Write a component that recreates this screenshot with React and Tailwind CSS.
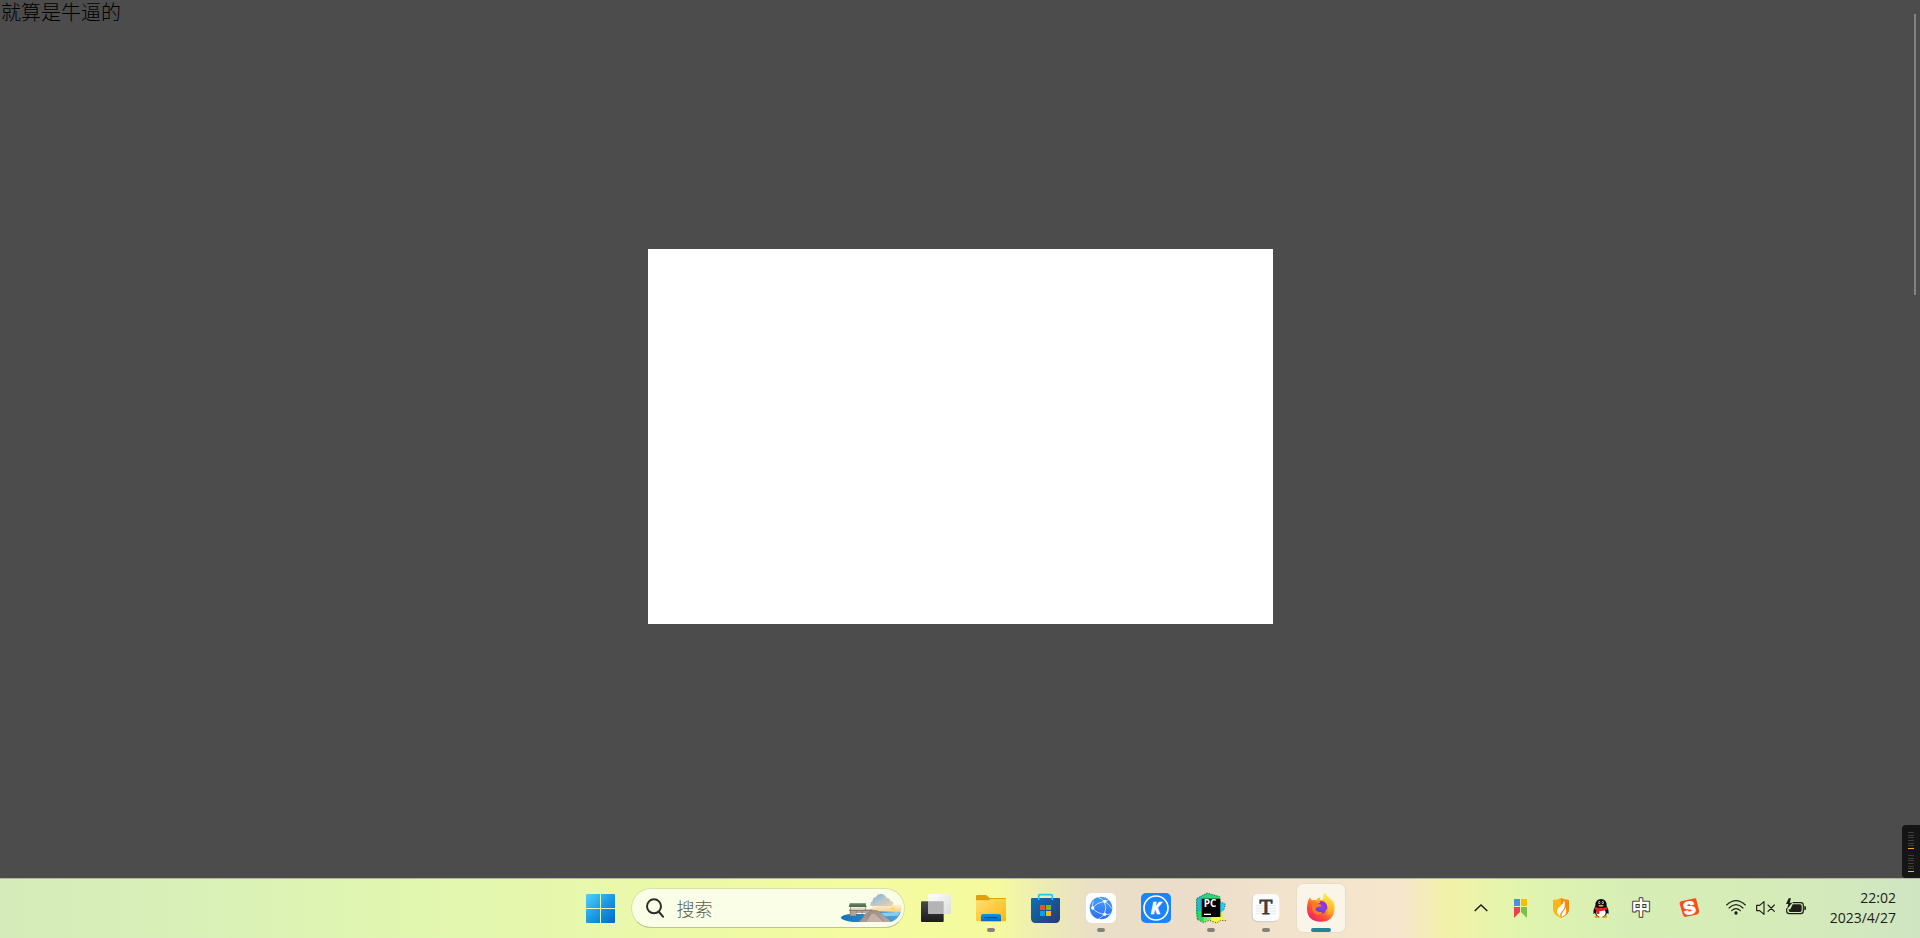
import React from "react";

function StartIcon() {
  return (
    <svg viewBox="45 42 144 144" className="size-12" aria-hidden="true">
      <defs>
        <linearGradient id="win" gradientUnits="userSpaceOnUse" x1="75" y1="72" x2="162" y2="159">
          <stop offset="0" stopColor="#4fd3fb" />
          <stop offset="0.5" stopColor="#1a9be4" />
          <stop offset="1" stopColor="#0067cc" />
        </linearGradient>
      </defs>
      <path
        fill="url(#win)"
        d="M78 72h39v42H75V75q0-3 3-3zM120 72h39q3 0 3 3v39h-42zM75 117h42v42H78q-3 0-3-3zM120 117h42v39q0 3-3 3h-39z"
      />
    </svg>
  );
}

function PierArt() {
  return (
    <svg viewBox="840 78 186 90" className="h-[30px] w-[62px]" aria-hidden="true">
      <defs>
        <linearGradient id="sea" x1="0" y1="0" x2="1" y2="0">
          <stop offset="0" stopColor="#1372b8" />
          <stop offset="1" stopColor="#4ba7dd" />
        </linearGradient>
        <linearGradient id="cloud" x1="0" y1="0" x2="1" y2="1">
          <stop offset="0" stopColor="#78b0dc" />
          <stop offset="0.5" stopColor="#b9c5cd" />
          <stop offset="1" stopColor="#f6cfae" />
        </linearGradient>
        <linearGradient id="dusk" x1="0" y1="0" x2="0" y2="1">
          <stop offset="0" stopColor="#fdf3d2" />
          <stop offset="1" stopColor="#fbc987" />
        </linearGradient>
        <linearGradient id="deck" x1="0" y1="0" x2="1" y2="1">
          <stop offset="0" stopColor="#94877f" />
          <stop offset="1" stopColor="#bca89d" />
        </linearGradient>
      </defs>
      <path fill="url(#dusk)" d="M932 124q30-12 92-12 2 14-2 24l-90 2z" />
      <circle cx="999" cy="126" r="7" fill="#ffd76a" />
      <path fill="url(#sea)" d="M842 152q6-9 28-11h52l20-8 80 2q-6 21-28 30H878q-30-4-36-13z" />
      <path fill="#8ccbea" d="M962 138l58-4-6 12-40 2z" />
      <path fill="url(#cloud)" d="M931 114q-1-8 7-13 1-10 9-10 5-11 17-10 12 1 15 12 10-1 12 8 9 2 9 9 0 6-8 7h-48q-10 3-13-3z" />
      <path fill="#b3a39a" d="M868 128h68l16 10-30 8h-12l8-8h-30v8h-18z" />
      <path fill="url(#deck)" d="M918 140l16-12 18 2 42 35h-38l-16-22-22 22h-20z" />
      <path fill="#c3b1a6" d="M934 140h12l28 25h-58z" />
      <path fill="#8d8079" d="M868 128h68v4h-68z" />
      <path stroke="#786b66" strokeWidth="1.5" fill="none" d="M932 140l-14 24M946 140l26 24M872 132v20M890 132v14M906 132v12" />
      <path fill="#566f54" d="M870 108h46l4 12h-54z" />
      <path fill="#83a070" d="M872 108h44l2 4h-48z" />
      <path stroke="#6d6359" strokeWidth="2" d="M872 120v9M916 120v9" />
      <path fill="#e6dcc4" d="M875 121h38v6h-38z" />
    </svg>
  );
}

function TaskViewIcon() {
  return (
    <svg viewBox="36 42 144 144" className="size-12" aria-hidden="true">
      <defs>
        <linearGradient id="tvd" x1="0" y1="0" x2="0" y2="1">
          <stop offset="0" stopColor="#4a4a4a" />
          <stop offset="1" stopColor="#1b1b1b" />
        </linearGradient>
        <linearGradient id="tvl" x1="0" y1="0" x2="1" y2="1">
          <stop offset="0" stopColor="#ffffff" />
          <stop offset="1" stopColor="#dcdcdc" />
        </linearGradient>
      </defs>
      <rect x="63" y="94" width="68" height="62" rx="3" fill="url(#tvd)" />
      <rect x="85" y="72" width="68" height="60" rx="3" fill="url(#tvl)" />
      <path d="M85 94h46v38H88q-3 0-3-3z" fill="#b4b4b4" />
    </svg>
  );
}

function FolderIcon() {
  return (
    <svg viewBox="201 42 144 144" className="size-12" aria-hidden="true">
      <defs>
        <linearGradient id="fold" x1="0" y1="0" x2="1" y2="1">
          <stop offset="0" stopColor="#ffdf74" />
          <stop offset="1" stopColor="#fbb710" />
        </linearGradient>
        <linearGradient id="tray" x1="0" y1="0" x2="0" y2="1">
          <stop offset="0" stopColor="#1593df" />
          <stop offset="1" stopColor="#0768bd" />
        </linearGradient>
      </defs>
      <path fill="#dfa00b" d="M228 96V79q0-4 4-4h24q3 0 5 2l8 7h46q3 0 3 3v9z" />
      <path fill="url(#fold)" d="M228 91h34q3 0 5-1l5-3h46v64q0 3-3 3h-84q-3 0-3-3z" />
      <path fill="url(#tray)" d="M243 154v-16q0-6 6-6h48q6 0 6 6v16z" />
      <path stroke="#054b8c" strokeWidth="3" strokeLinecap="round" d="M254 143h37" />
    </svg>
  );
}

function StoreIcon() {
  return (
    <svg viewBox="366 42 144 144" className="size-12" aria-hidden="true">
      <defs>
        <linearGradient id="bag" x1="0" y1="0" x2="1" y2="1">
          <stop offset="0" stopColor="#0c6fbe" />
          <stop offset="1" stopColor="#273a6e" />
        </linearGradient>
      </defs>
      <path fill="url(#bag)" d="M396 84h81q3 0 3 3v58q0 14-14 14h-59q-14 0-14-14V87q0-3 3-3z" />
      <path fill="none" stroke="#1fc5f5" strokeWidth="5" d="M416 90V78q0-4 4-4h33q4 0 4 4v12" />
      <path fill="#f25022" d="M420 105h15v15h-15z" />
      <path fill="#7fba00" d="M438 105h15v15h-15z" />
      <path fill="#00a4ef" d="M420 123h15v15h-15z" />
      <path fill="#ffb900" d="M438 123h15v15h-15z" />
    </svg>
  );
}

function NetworkIcon() {
  return (
    <svg viewBox="531 42 144 144" className="size-12" aria-hidden="true">
      <defs>
        <linearGradient id="globe" x1="0" y1="0" x2="0" y2="1">
          <stop offset="0" stopColor="#4aa0fc" />
          <stop offset="1" stopColor="#2b6df0" />
        </linearGradient>
      </defs>
      <rect x="558" y="69" width="90" height="90" rx="17" fill="#fff" />
      <circle cx="603" cy="114" r="34" fill="url(#globe)" />
      <path
        fill="none"
        stroke="#e2f0ff"
        strokeWidth="2.5"
        d="M594 81q10 4 19 13-24 4-36 20 14 16 36 19-10 10-18 14M613 94q9 20 0 39M613 94q8-1 14-6M613 133q10 1 18-1M577 114q-1-9 3-19M613 94q16 9 23 22"
      />
      <circle cx="578" cy="114" r="5" fill="#fff" />
      <circle cx="614" cy="94" r="5" fill="#fff" />
      <circle cx="614" cy="133" r="5" fill="#fff" />
    </svg>
  );
}

function KugouIcon() {
  return (
    <svg viewBox="6 42 144 144" className="size-12" aria-hidden="true">
      <rect x="33" y="69" width="90" height="90" rx="15" fill="#1c84fb" />
      <circle cx="78" cy="114" r="36" fill="none" stroke="#fff" strokeWidth="5" />
      <text
        x="77"
        y="131"
        textAnchor="middle"
        className="fill-white stroke-white stroke-2 font-['Open_Sans',sans-serif] text-[48px] font-bold italic"
      >
        K
      </text>
    </svg>
  );
}

function PyCharmIcon() {
  return (
    <svg viewBox="171 42 144 144" className="size-12" aria-hidden="true">
      <defs>
        <linearGradient id="pc" x1="0" y1="0" x2="1" y2="1">
          <stop offset="0" stopColor="#21c8a0" />
          <stop offset="0.45" stopColor="#30df6c" />
          <stop offset="0.8" stopColor="#c9f450" />
          <stop offset="1" stopColor="#fcf84a" />
        </linearGradient>
      </defs>
      <path
        fill="url(#pc)"
        d="M200 86l12-7 19-10 14 4 22 6 4 14 8 48 8 11-16-1-12 8-22-8-18 7-18-10-3-20z"
      />
      <path fill="#1fb9c9" d="M200 86l12-7 3 20-4 26-11-3z" />
      <path fill="#22d2f0" d="M266 94l20 8-5 20-12 6z" />
      <path fill="#fbf24a" d="M244 138l34 2 9 11-16 1-12 6-16-6z" />
      <path fill="#2bd95e" d="M202 128l16 8 4 20-18-9z" />
      <path
        fill="none"
        stroke="#162a20"
        strokeWidth="2"
        strokeDasharray="4 4"
        d="M202 148l-3-62 32-17 38 11v14l17 8-5 20M288 152l-16-1-12 8-22-8-18 7-18-10"
      />
      <rect x="215" y="86" width="56" height="55" fill="#000" />
      <path fill="#fff" d="M222 131h21v4h-21z" />
      <text
        x="240"
        y="112"
        textAnchor="middle"
        className="fill-white font-['Open_Sans',sans-serif] text-[30px] font-bold"
      >
        PC
      </text>
    </svg>
  );
}

function TyporaIcon() {
  return (
    <svg viewBox="336 42 144 144" className="size-12" aria-hidden="true">
      <rect x="365" y="74" width="81" height="83" rx="15" fill="#d3d0cb" />
      <rect x="368" y="72" width="80" height="81" rx="15" fill="#fcfcfc" />
      <path stroke="#dedede" strokeWidth="2" d="M378 107h60M378 115h60M378 123h60M378 131h60" />
      <text
        x="408"
        y="132"
        textAnchor="middle"
        className="fill-[#3b3b3b] stroke-[#3b3b3b] stroke-3 font-['Liberation_Serif',serif] text-[63px]"
      >
        T
      </text>
    </svg>
  );
}

function FirefoxIcon() {
  return (
    <svg viewBox="501 42 144 144" className="size-12" aria-hidden="true">
      <defs>
        <linearGradient id="ffx" gradientUnits="userSpaceOnUse" x1="604" y1="76" x2="545" y2="152">
          <stop offset="0" stopColor="#fff14a" />
          <stop offset="0.35" stopColor="#ffb22b" />
          <stop offset="0.65" stopColor="#ff5a30" />
          <stop offset="1" stopColor="#f2176b" />
        </linearGradient>
        <linearGradient id="flame" x1="0" y1="0" x2="0" y2="1">
          <stop offset="0" stopColor="#fff04c" />
          <stop offset="1" stopColor="#ff9a22" />
        </linearGradient>
        <radialGradient id="orb" cx="0.65" cy="0.3" r="0.8">
          <stop offset="0" stopColor="#a43ce8" />
          <stop offset="1" stopColor="#4a42d2" />
        </radialGradient>
      </defs>
      <path
        fill="url(#ffx)"
        d="M540 82q2 6 6 9 7-2 12 0 5-7 13-10-3 6 1 10l10-4q-5-10 3-18 3 9 14 16 6 4 8 11l1-8q6 11 6 25-1 42-42 42-40-1-41-39 0-21 9-34z"
      />
      <path fill="url(#flame)" d="M582 88q-5-11 3-19 3 9 14 17 11 11 8 27-3 17-16 25 5-18 1-29-4-10-10-21z" />
      <circle cx="572" cy="115" r="17" fill="url(#orb)" />
      <path fill="#ff7a28" d="M546 97q14-3 20 5l9 3q-2 6-10 6-8 1-9 7 4 8 12 8 6-1 10 2-5 7-16 6-13-3-16-20z" />
      <path fill="#8b35dc" d="M568 94q14-3 21 7 5 9 2 19-3-8-11-11-8-4-12-15z" />
    </svg>
  );
}

function ChevronIcon() {
  return (
    <svg viewBox="33 54 120 120" className="size-10" aria-hidden="true">
      <path fill="none" stroke="#1d1f18" strokeWidth="4.5" d="M74 123l19-18 19 18" />
    </svg>
  );
}

function BookmarkIcon() {
  return (
    <svg viewBox="153 54 120 120" className="size-10" aria-hidden="true">
      <path fill="#4a8df6" d="M192 87h18v21h-18z" />
      <path fill="#fbbc05" d="M213 87h18v21h-18z" />
      <path fill="#ea4540" d="M192 111h18v15l-18 18z" />
      <path fill="#7cc04b" d="M213 111h18v33l-18-18z" />
    </svg>
  );
}

function ShieldIcon() {
  return (
    <svg viewBox="273 54 120 120" className="size-10" aria-hidden="true">
      <path fill="#fdb415" d="M333 84q12 6 24 6v28q0 17-24 26-24-9-24-26V90q12 0 24-6z" />
      <path fill="#f78a0c" d="M333 84q12 6 24 6v28q0 17-24 26z" />
      <path fill="#fff" d="M342 91q0 8-10 16-12 9-11 20 1 7 9 12-1-9 6-15 6-6 8-14 3-9-2-19z" />
      <path fill="#fff" d="M346 111q0 7-6 13-7 7-5 17 12-5 14-15 0-9-3-15z" />
    </svg>
  );
}

function PenguinIcon() {
  return (
    <svg viewBox="393 54 120 120" className="size-10" aria-hidden="true">
      <ellipse cx="442" cy="140" rx="9" ry="4" fill="#f5a012" />
      <ellipse cx="463" cy="140" rx="9" ry="4" fill="#f5a012" />
      <path fill="#0a0a0a" d="M453 87q17 0 17 20 7 12 6 24-3 1-5-3-3 13-18 13t-18-13q-2 4-5 3-1-12 6-24 0-20 17-20z" />
      <ellipse cx="453" cy="128" rx="14" ry="13" fill="#fff" />
      <ellipse cx="448" cy="98" rx="3" ry="4" fill="#fff" />
      <ellipse cx="458" cy="98" rx="3" ry="4" fill="#fff" />
      <circle cx="449" cy="98" r="2" fill="#000" />
      <circle cx="457" cy="98" r="2" fill="#000" />
      <ellipse cx="453" cy="107" rx="8" ry="3" fill="#f5a012" />
      <path fill="#ec1c24" d="M435 111q18 7 36 0l2 7q-13 6-25 6v8h-8v-10l-6-4z" />
    </svg>
  );
}

function ImeIcon() {
  return (
    <svg viewBox="513 54 120 120" className="size-10" aria-hidden="true">
      <text
        x="573"
        y="136"
        textAnchor="middle"
        strokeWidth="6"
        strokeLinejoin="round"
        paintOrder="stroke"
        className="fill-white stroke-[#33363c] font-['Noto_Sans_CJK_SC',sans-serif] text-[57px] font-bold"
      >
        中
      </text>
    </svg>
  );
}

function SogouIcon() {
  return (
    <svg viewBox="-33 54 120 120" className="size-10" aria-hidden="true">
      <g transform="rotate(-12 28 114)">
        <path fill="#f4511e" d="M8 89h42q4 0 4 5l1 32q0 12-12 12H13q-8 0-8-8L2 96q0-7 6-7z" />
        <text
          x="28"
          y="132"
          textAnchor="middle"
          className="fill-white stroke-white stroke-4 font-['Liberation_Sans',sans-serif] text-[52px] font-bold"
        >
          S
        </text>
      </g>
    </svg>
  );
}

function WifiIcon() {
  return (
    <svg viewBox="123 54 90 120" className="h-10 w-[30px]" aria-hidden="true">
      <g fill="none" stroke="#1d1f18" strokeWidth="3.5" strokeLinecap="round">
        <path d="M140 105q28-26 56 0" />
        <path d="M147 114q21-20 42 0" />
        <path d="M155 122q13-12 26 0" />
      </g>
      <circle cx="168" cy="129" r="5" fill="#1d1f18" />
    </svg>
  );
}

function MutedIcon() {
  return (
    <svg viewBox="213 54 90 120" className="h-10 w-[30px]" aria-hidden="true">
      <g fill="none" stroke="#1d1f18" strokeWidth="3.5" strokeLinejoin="round" strokeLinecap="round">
        <path d="M230 106h9l13-11v38l-13-11h-9z" />
        <path d="M264 105l19 19M283 105l-19 19" />
      </g>
    </svg>
  );
}

function BatteryIcon() {
  return (
    <svg viewBox="303 54 90 120" className="h-10 w-[30px]" aria-hidden="true">
      <path fill="none" stroke="#1d1f18" strokeWidth="3.5" d="M338 98h24q8 0 8 8v17q0 8-8 8h-34q-8 0-8-8v-8" />
      <path fill="#1d1f18" d="M338 103h22q5 0 5 5v13q0 5-5 5h-29q-5 0-5-5v-3h5zM373 108q5 0 5 4v5q0 4-5 4z" />
      <path fill="#1d1f18" d="M326 85l-8 17h7l-4 16 16-20h-8l4-13z" />
    </svg>
  );
}

const apps = [
  { name: "任务视图", Icon: TaskViewIcon },
  { name: "文件资源管理器", Icon: FolderIcon, running: true },
  { name: "Microsoft Store", Icon: StoreIcon },
  { name: "网络", Icon: NetworkIcon, running: true },
  { name: "酷狗音乐", Icon: KugouIcon },
  { name: "PyCharm", Icon: PyCharmIcon, running: true },
  { name: "Typora", Icon: TyporaIcon, running: true },
  { name: "Firefox", Icon: FirefoxIcon, active: true },
];

const trayItems = [
  { name: "显示隐藏的图标", Icon: ChevronIcon },
  { name: "书签", Icon: BookmarkIcon },
  { name: "安全防护", Icon: ShieldIcon },
  { name: "QQ", Icon: PenguinIcon },
  { name: "中文输入", Icon: ImeIcon },
];

function AppButton({ name, Icon, running, active }) {
  return (
    <button
      type="button"
      aria-label={name}
      className={
        active
          ? "relative size-12 rounded-md bg-[#faf4e9] shadow-[0_0_0_1px_#e9dcc8]"
          : "relative size-12 rounded-md"
      }
    >
      <Icon />
      {running && (
        <span className="absolute bottom-0 left-1/2 h-1 w-2 -translate-x-1/2 rounded-full bg-[#85807a]" />
      )}
      {active && (
        <span className="absolute bottom-0 left-1/2 h-1 w-5 -translate-x-1/2 rounded-full bg-[#24859a]" />
      )}
    </button>
  );
}

function LevelMeter({ lit }) {
  return (
    <div className="flex h-[17px] flex-col justify-between">
      {[0, 1, 2, 3, 4, 5].map((n) => (
        <span key={n} className="h-px w-1.5 bg-[#3c3c3c]" />
      ))}
      <span className={lit} />
    </div>
  );
}

function Taskbar() {
  return (
    <footer className="grid h-[60px] grid-cols-[1fr_auto_1fr] items-center bg-[linear-gradient(90deg,#d5ecba_0%,#d9f0b8_10%,#e0f6b0_20%,#e9f8ab_32%,#f4fba0_44%,#f5fa9e_52%,#ecebb6_54.5%,#eadfc8_57%,#ebddca_62%,#f2e4cc_68%,#f6e6cc_73%,#f2f2a8_75.5%,#e2f5ae_79%,#d6eeb6_85%,#d6ecb8_92%,#cfe5c2_100%)] shadow-[inset_0_1px_0_#b3ba98]">
      <div />
      <nav className="flex items-center gap-[7px]" aria-label="任务栏">
        <button type="button" aria-label="开始" className="size-12">
          <StartIcon />
        </button>
        <label className="flex h-10 w-[274px] items-center rounded-full border border-[#d9e2a4] border-b-[#bcc68c] bg-[#fbfee6] pr-0.5 pl-3.5">
          <svg viewBox="258 84 57 60" className="h-5 w-[19px] shrink-0" aria-hidden="true">
            <circle cx="282" cy="109" r="21" fill="none" stroke="#2b2d26" strokeWidth="6" />
            <path stroke="#2b2d26" strokeWidth="6" strokeLinecap="round" d="M297 126l12 14" />
          </svg>
          <input
            type="text"
            placeholder="搜索"
            aria-label="搜索"
            className="ml-3 min-w-0 flex-1 bg-transparent font-['Noto_Sans_CJK_SC',sans-serif] text-lg leading-6 font-light outline-none placeholder:text-[#5c5e54]"
          />
          <PierArt />
        </label>
        {apps.map((app) => (
          <AppButton key={app.name} {...app} />
        ))}
      </nav>
      <div className="flex items-center justify-end pr-6">
        {trayItems.map(({ name, Icon }) => (
          <button key={name} type="button" aria-label={name}>
            <Icon />
          </button>
        ))}
        <button type="button" aria-label="搜狗输入法" className="ml-2">
          <SogouIcon />
        </button>
        <button type="button" aria-label="网络、音量和电池" className="ml-3 flex">
          <WifiIcon />
          <MutedIcon />
          <BatteryIcon />
        </button>
        <button
          type="button"
          className="w-[85px] text-right font-['Open_Sans','Noto_Sans',sans-serif] text-sm leading-5 text-[#1d1f18]"
        >
          <time className="block">22:02</time>
          <time className="block">2023/4/27</time>
        </button>
      </div>
    </footer>
  );
}

export default function App() {
  return (
    <div className="flex min-h-screen flex-col bg-[#4c4c4c]">
      <main className="relative grid flex-1 place-items-center pb-[5px]">
        <p className="absolute top-0 left-0 pl-px font-['Noto_Sans_CJK_SC',sans-serif] text-xl leading-6 font-light text-black">
          就算是牛逼的
        </p>
        <section className="h-[375px] w-[625px] bg-white" aria-label="弹窗" />
        <div className="absolute top-3.5 right-1 h-[281px] w-0.5 bg-[#828282]" />
        <div className="absolute right-0 bottom-0 flex h-[53px] w-[18px] flex-col items-center gap-1.5 rounded-l bg-[#151515] pt-[7px]">
          <LevelMeter lit="h-px w-1.5 bg-[#f9a12a]" />
          <LevelMeter lit="h-px w-1.5 bg-[#8fe02c]" />
        </div>
      </main>
      <Taskbar />
    </div>
  );
}
